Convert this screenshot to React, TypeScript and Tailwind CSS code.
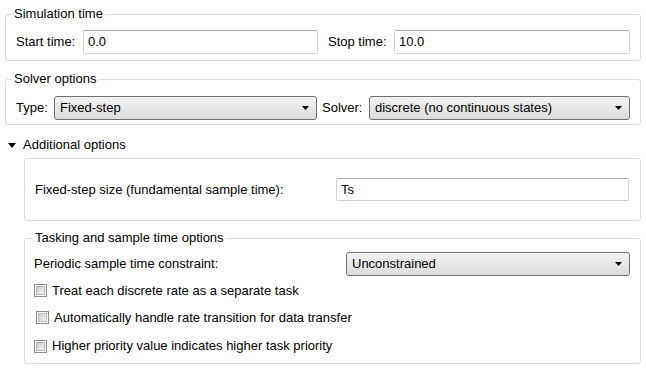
import React from "react";

function Caret({ w = 7, h = 4 }: { w?: number; h?: number }) {
  return (
    <svg width={w} height={h} viewBox={`0 0 ${w} ${h}`} className="shrink-0">
      <path d={`M0 0h${w}L${w / 2} ${h}z`} fill="#000" />
    </svg>
  );
}

function TextBox({ value, className }: { value: string; className: string }) {
  return (
    <div
      className={`flex items-center border border-[#cdd2d8] border-t-[#abadb3] bg-white px-[4px] rounded-[2px] ${className}`}
    >
      {value}
    </div>
  );
}

function Select({ value, className }: { value: string; className: string }) {
  return (
    <div
      className={`flex items-center justify-between rounded-[3px] border border-[#707070] bg-gradient-to-b from-[#f2f2f2] to-[#dcdcdc] pl-[5px] pr-[7px] ${className}`}
    >
      <span>{value}</span>
      <Caret />
    </div>
  );
}

function Check({ label, className = "" }: { label: string; className?: string }) {
  return (
    <div className={`flex items-center gap-[5px] h-[27px] ${className}`}>
      <span className="shrink-0 w-[13px] h-[13px] border border-[#8e8f8f] bg-white p-[1px]">
        <span className="block w-full h-full bg-gradient-to-br from-[#cbcbcb] to-[#f4f4f4] border border-[#b8b8b8]" />
      </span>
      <span>{label}</span>
    </div>
  );
}

export default function App() {
  return (
    <div
      className="w-[646px] h-[369px] bg-white text-[13px] leading-[16px] text-black px-[5px] pt-[6px] overflow-hidden whitespace-nowrap"
      style={{ fontFamily: "Tahoma, 'Liberation Sans', sans-serif" }}
    >
      <fieldset className="border border-[#d5dfe5] rounded-[3px] px-[10px] pb-[6px] pt-[8px]">
        <legend className="px-[2px] ml-[-4px]">Simulation time</legend>
        <div className="flex items-center h-[24px]">
          <span className="w-[67px]">Start time:</span>
          <TextBox value="0.0" className="w-[235px] h-[24px]" />
          <span className="ml-[10px] w-[66px]">Stop time:</span>
          <TextBox value="10.0" className="flex-1 h-[24px]" />
        </div>
      </fieldset>

      <fieldset className="mt-[10px] border border-[#d5dfe5] rounded-[3px] px-[10px] pb-[4px] pt-[9px]">
        <legend className="px-[2px] ml-[-4px]">Solver options</legend>
        <div className="flex items-center h-[24px]">
          <span className="w-[38px]">Type:</span>
          <Select value="Fixed-step" className="w-[263px] h-[24px]" />
          <span className="ml-[5px] w-[47px]">Solver:</span>
          <Select value="discrete (no continuous states)" className="flex-1 h-[24px]" />
        </div>
      </fieldset>

      <div className="flex items-center gap-[7px] h-[16px] mt-[12px] pl-[3px]">
        <Caret w={8} h={5} />
        <span>Additional options</span>
      </div>

      <div className="ml-[19px] mt-[5px] flex flex-col gap-[9px]">
        <div className="h-[63px] border border-[#d5dfe5] rounded-[3px] flex items-center pl-[10px] pr-[11px]">
          <span className="w-[301px]">Fixed-step size (fundamental sample time):</span>
          <TextBox value="Ts" className="flex-1 h-[23px]" />
        </div>

        <fieldset className="border border-[#d5dfe5] rounded-[3px] pl-[9px] pr-[10px] pb-[2px] pt-[4px]">
          <legend className="px-[2px] ml-[-1px]">Tasking and sample time options</legend>
          <div className="flex items-center h-[27px]">
            <span className="w-[312px]">Periodic sample time constraint:</span>
            <Select value="Unconstrained" className="flex-1 h-[24px]" />
          </div>
          <Check label="Treat each discrete rate as a separate task" />
          <Check label="Automatically handle rate transition for data transfer" className="pl-[2px]" />
          <Check label="Higher priority value indicates higher task priority" className="h-[30px]" />
        </fieldset>
      </div>
    </div>
  );
}
